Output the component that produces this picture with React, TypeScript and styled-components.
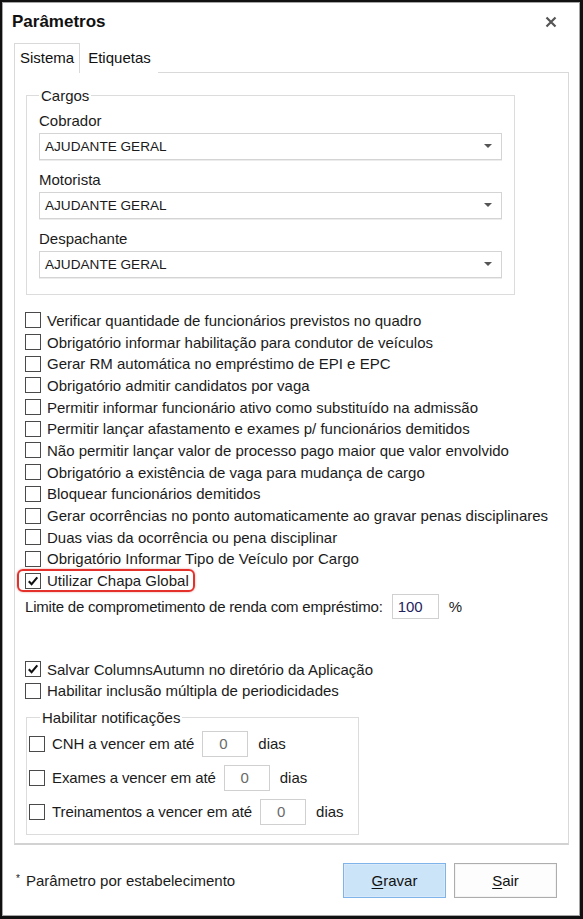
import styled, { createGlobalStyle } from "styled-components";

const GlobalStyle = createGlobalStyle`
  html, body {
    margin: 0;
    padding: 0;
    background: #fff;
  }
  body {
    font-family: "Liberation Sans", Arial, sans-serif;
    font-size: 15px;
    color: #1b1b1b;
  }
`;

const Window = styled.div`
  width: 583px;
  height: 919px;
  box-sizing: border-box;
  border: 2px solid #111;
  border-right-width: 3px;
  border-bottom-width: 3px;
  box-shadow: inset 0 0 0 1px #a5a5a5;
  background: #fff;
  display: flex;
  flex-direction: column;
`;

const TitleBar = styled.div`
  height: 40px;
  display: flex;
  align-items: center;
  justify-content: space-between;
  padding: 0 23px 0 10px;
`;

const Title = styled.span`
  font-size: 17px;
  font-weight: bold;
  color: #111;
`;

const CloseButton = styled.button`
  border: none;
  background: none;
  padding: 0;
  width: 12px;
  height: 12px;
  display: flex;
  cursor: pointer;
`;

const TabStrip = styled.div`
  display: flex;
  align-items: flex-end;
  margin-left: 12px;
  height: 30px;
`;

const Tab = styled.div<{ $active?: boolean }>`
  height: 30px;
  box-sizing: border-box;
  display: flex;
  align-items: center;
  padding: ${(p) => (p.$active ? "0 5px 3px 5px" : "0 6px 3px 7px")};
  background: #fff;
  border: 1px solid ${(p) => (p.$active ? "#d9d9d9" : "transparent")};
  border-bottom: none;
  margin-bottom: -1px;
  position: relative;
  z-index: 1;
  font-size: 15px;
  color: #111;
`;

const Panel = styled.div`
  margin-left: 12px;
  width: 555px;
  height: 773px;
  box-sizing: border-box;
  border: 1px solid #d9d9d9;
  border-bottom: 2px solid #d2d2d2;
  padding: 0 0 0 10px;
  display: flex;
  flex-direction: column;
`;

const Group = styled.fieldset<{ $width: number; $pad: string; $top: number }>`
  width: ${(p) => p.$width}px;
  box-sizing: border-box;
  margin: ${(p) => p.$top}px 0 0 1px;
  padding: ${(p) => p.$pad};
  border: 1px solid #dcdcdc;
  display: flex;
  flex-direction: column;
  min-width: 0;
`;

const Legend = styled.legend<{ $offset: number }>`
  padding: 0 2px;
  margin-left: ${(p) => p.$offset}px;
  line-height: 17px;
  font-size: 15px;
  color: #1b1b1b;
`;

const FieldLabel = styled.div<{ $first?: boolean }>`
  line-height: 17px;
  margin-top: ${(p) => (p.$first ? "0" : "11.5px")};
  margin-bottom: 3.5px;
`;

const Select = styled.div`
  height: 27px;
  box-sizing: border-box;
  border: 1px solid #d4d4d4;
  box-shadow: 0 1px 0 #ececec;
  display: flex;
  align-items: center;
  justify-content: space-between;
  padding: 0 9px 0 5px;
  font-size: 13.6px;
  color: #1b1b1b;
`;

const Caret = styled.span`
  width: 0;
  height: 0;
  border-left: 4px solid transparent;
  border-right: 4px solid transparent;
  border-top: 4px solid #555;
`;

const CheckList = styled.div`
  display: flex;
  flex-direction: column;
  margin-top: 15px;
`;

const Row = styled.label`
  display: flex;
  align-items: center;
  height: 21.7px;
  gap: 6px;
  white-space: nowrap;
  color: #1b1b1b;
`;

const Highlight = styled.span`
  display: inline-flex;
  align-items: center;
  gap: 6px;
  border: 2px solid #e4312c;
  border-radius: 6px;
  box-shadow: 0 0 2px rgba(200, 40, 40, 0.5);
  padding: 1px 4px 1px 6px;
  margin: -3px -6px -3px -8px;
`;

const Box = styled.span`
  width: 16px;
  height: 16px;
  box-sizing: border-box;
  border: 1px solid #4a4a4a;
  background: #fff;
  display: inline-flex;
  align-items: center;
  justify-content: center;
  flex: none;
`;

const LimitRow = styled.div`
  display: flex;
  align-items: center;
  height: 25px;
  margin-top: 3px;
  gap: 9px;
  white-space: nowrap;
`;

const LimitText = styled.span`
  letter-spacing: -0.2px;
`;

const NumberInput = styled.div<{ $width: number; $height: number; $muted?: boolean }>`
  width: ${(p) => p.$width}px;
  height: ${(p) => p.$height}px;
  box-sizing: border-box;
  border: 1px solid #d0d0d0;
  display: flex;
  align-items: center;
  justify-content: ${(p) => (p.$muted ? "center" : "flex-start")};
  padding: ${(p) => (p.$muted ? "0 4px 0 0" : "0 0 0 5px")};
  color: ${(p) => (p.$muted ? "#6a6a6a" : "#23235e")};
  font-size: 15px;
`;

const Unit = styled.span<{ $gap?: number }>`
  margin-left: ${(p) => p.$gap ?? 1}px;
`;

const SecondList = styled.div`
  display: flex;
  flex-direction: column;
  margin-top: 39px;
`;

const NotifyRows = styled.div`
  display: flex;
  flex-direction: column;
  gap: 6px;
`;

const NotifyRow = styled.div`
  display: flex;
  align-items: center;
  height: 28px;
  white-space: nowrap;
`;

const NotifyLabel = styled.label`
  display: flex;
  align-items: center;
  gap: 7px;
  margin-right: 8px;
  letter-spacing: -0.1px;
`;

const Footer = styled.div`
  flex: 1;
  display: flex;
  align-items: center;
  padding: 0 23px 0 14px;
`;

const Note = styled.span`
  flex: 1;
  font-size: 15px;
  color: #1b1b1b;
`;

const Star = styled.span`
  font-size: 10px;
  vertical-align: 4px;
  margin-right: 6px;
`;

const Button = styled.button<{ $primary?: boolean }>`
  width: 103px;
  height: 35px;
  box-sizing: border-box;
  margin-left: 8px;
  font-family: inherit;
  font-size: 15px;
  color: #111;
  background: ${(p) => (p.$primary ? "#cce4f7" : "#fdfdfd")};
  border: 1px solid ${(p) => (p.$primary ? "#7eb4ea" : "#adadad")};
  box-shadow: inset 0 0 0 1px ${(p) => (p.$primary ? "#d8eaf9" : "#f4f4f4")};
  cursor: pointer;

  u {
    text-decoration-thickness: 1px;
    text-underline-offset: 2px;
  }
`;

const Check = ({ checked }: { checked?: boolean }) => (
  <Box>
    {checked && (
      <svg width="12" height="12" viewBox="0 0 12 12">
        <path d="M1.8 6.2 L4.6 9.2 L10.3 2.4" fill="none" stroke="#111" strokeWidth="2.1" />
      </svg>
    )}
  </Box>
);

const cargos = ["Cobrador", "Motorista", "Despachante"];

const options = [
  "Verificar quantidade de funcionários previstos no quadro",
  "Obrigatório informar habilitação para condutor de veículos",
  "Gerar RM automática no empréstimo de EPI e EPC",
  "Obrigatório admitir candidatos por vaga",
  "Permitir informar funcionário ativo como substituído na admissão",
  "Permitir lançar afastamento e exames p/ funcionários demitidos",
  "Não permitir lançar valor de processo pago maior que valor envolvido",
  "Obrigatório a existência de vaga para mudança de cargo",
  "Bloquear funcionários demitidos",
  "Gerar ocorrências no ponto automaticamente ao gravar penas disciplinares",
  "Duas vias da ocorrência ou pena disciplinar",
  "Obrigatório Informar Tipo de Veículo por Cargo",
];

const notifications = [
  "CNH a vencer em até",
  "Exames a vencer em até",
  "Treinamentos a vencer em até",
];

export default function App() {
  return (
    <>
      <GlobalStyle />
      <Window>
        <TitleBar>
          <Title>Parâmetros</Title>
          <CloseButton aria-label="Fechar">
            <svg width="12" height="12" viewBox="0 0 12 12">
              <path d="M1.5 1.5 L10.5 10.5 M10.5 1.5 L1.5 10.5" stroke="#555" strokeWidth="2.2" />
            </svg>
          </CloseButton>
        </TitleBar>

        <TabStrip>
          <Tab $active>Sistema</Tab>
          <Tab>Etiquetas</Tab>
        </TabStrip>

        <Panel>
          <Group $width={489} $top={14} $pad="8px 12px 16px 12px">
            <Legend $offset={0}>Cargos</Legend>
            {cargos.map((c, i) => (
              <div key={c}>
                <FieldLabel $first={i === 0}>{c}</FieldLabel>
                <Select>
                  <span>AJUDANTE GERAL</span>
                  <Caret />
                </Select>
              </div>
            ))}
          </Group>

          <CheckList>
            {options.map((o) => (
              <Row key={o}>
                <Check />
                <span>{o}</span>
              </Row>
            ))}
            <Row>
              <Highlight>
                <Check checked />
                <span>Utilizar Chapa Global</span>
              </Highlight>
            </Row>
          </CheckList>

          <LimitRow>
            <LimitText>Limite de comprometimento de renda com empréstimo:</LimitText>
            <NumberInput $width={47} $height={25}>100</NumberInput>
            <Unit>%</Unit>
          </LimitRow>

          <SecondList>
            <Row>
              <Check checked />
              <span>Salvar ColumnsAutumn no diretório da Aplicação</span>
            </Row>
            <Row>
              <Check />
              <span>Habilitar inclusão múltipla de periodicidades</span>
            </Row>
          </SecondList>

          <Group $width={333} $top={7} $pad="4px 0 8px 2px">
            <Legend $offset={11}>Habilitar notificações</Legend>
            <NotifyRows>
              {notifications.map((n) => (
                <NotifyRow key={n}>
                  <NotifyLabel>
                    <Check />
                    <span>{n}</span>
                  </NotifyLabel>
                  <NumberInput $width={46} $height={26} $muted>
                    0
                  </NumberInput>
                  <Unit $gap={10}>dias</Unit>
                </NotifyRow>
              ))}
            </NotifyRows>
          </Group>
        </Panel>

        <Footer>
          <Note>
            <Star>*</Star>Parâmetro por estabelecimento
          </Note>
          <Button $primary>
            <u>G</u>ravar
          </Button>
          <Button>
            <u>S</u>air
          </Button>
        </Footer>
      </Window>
    </>
  );
}
